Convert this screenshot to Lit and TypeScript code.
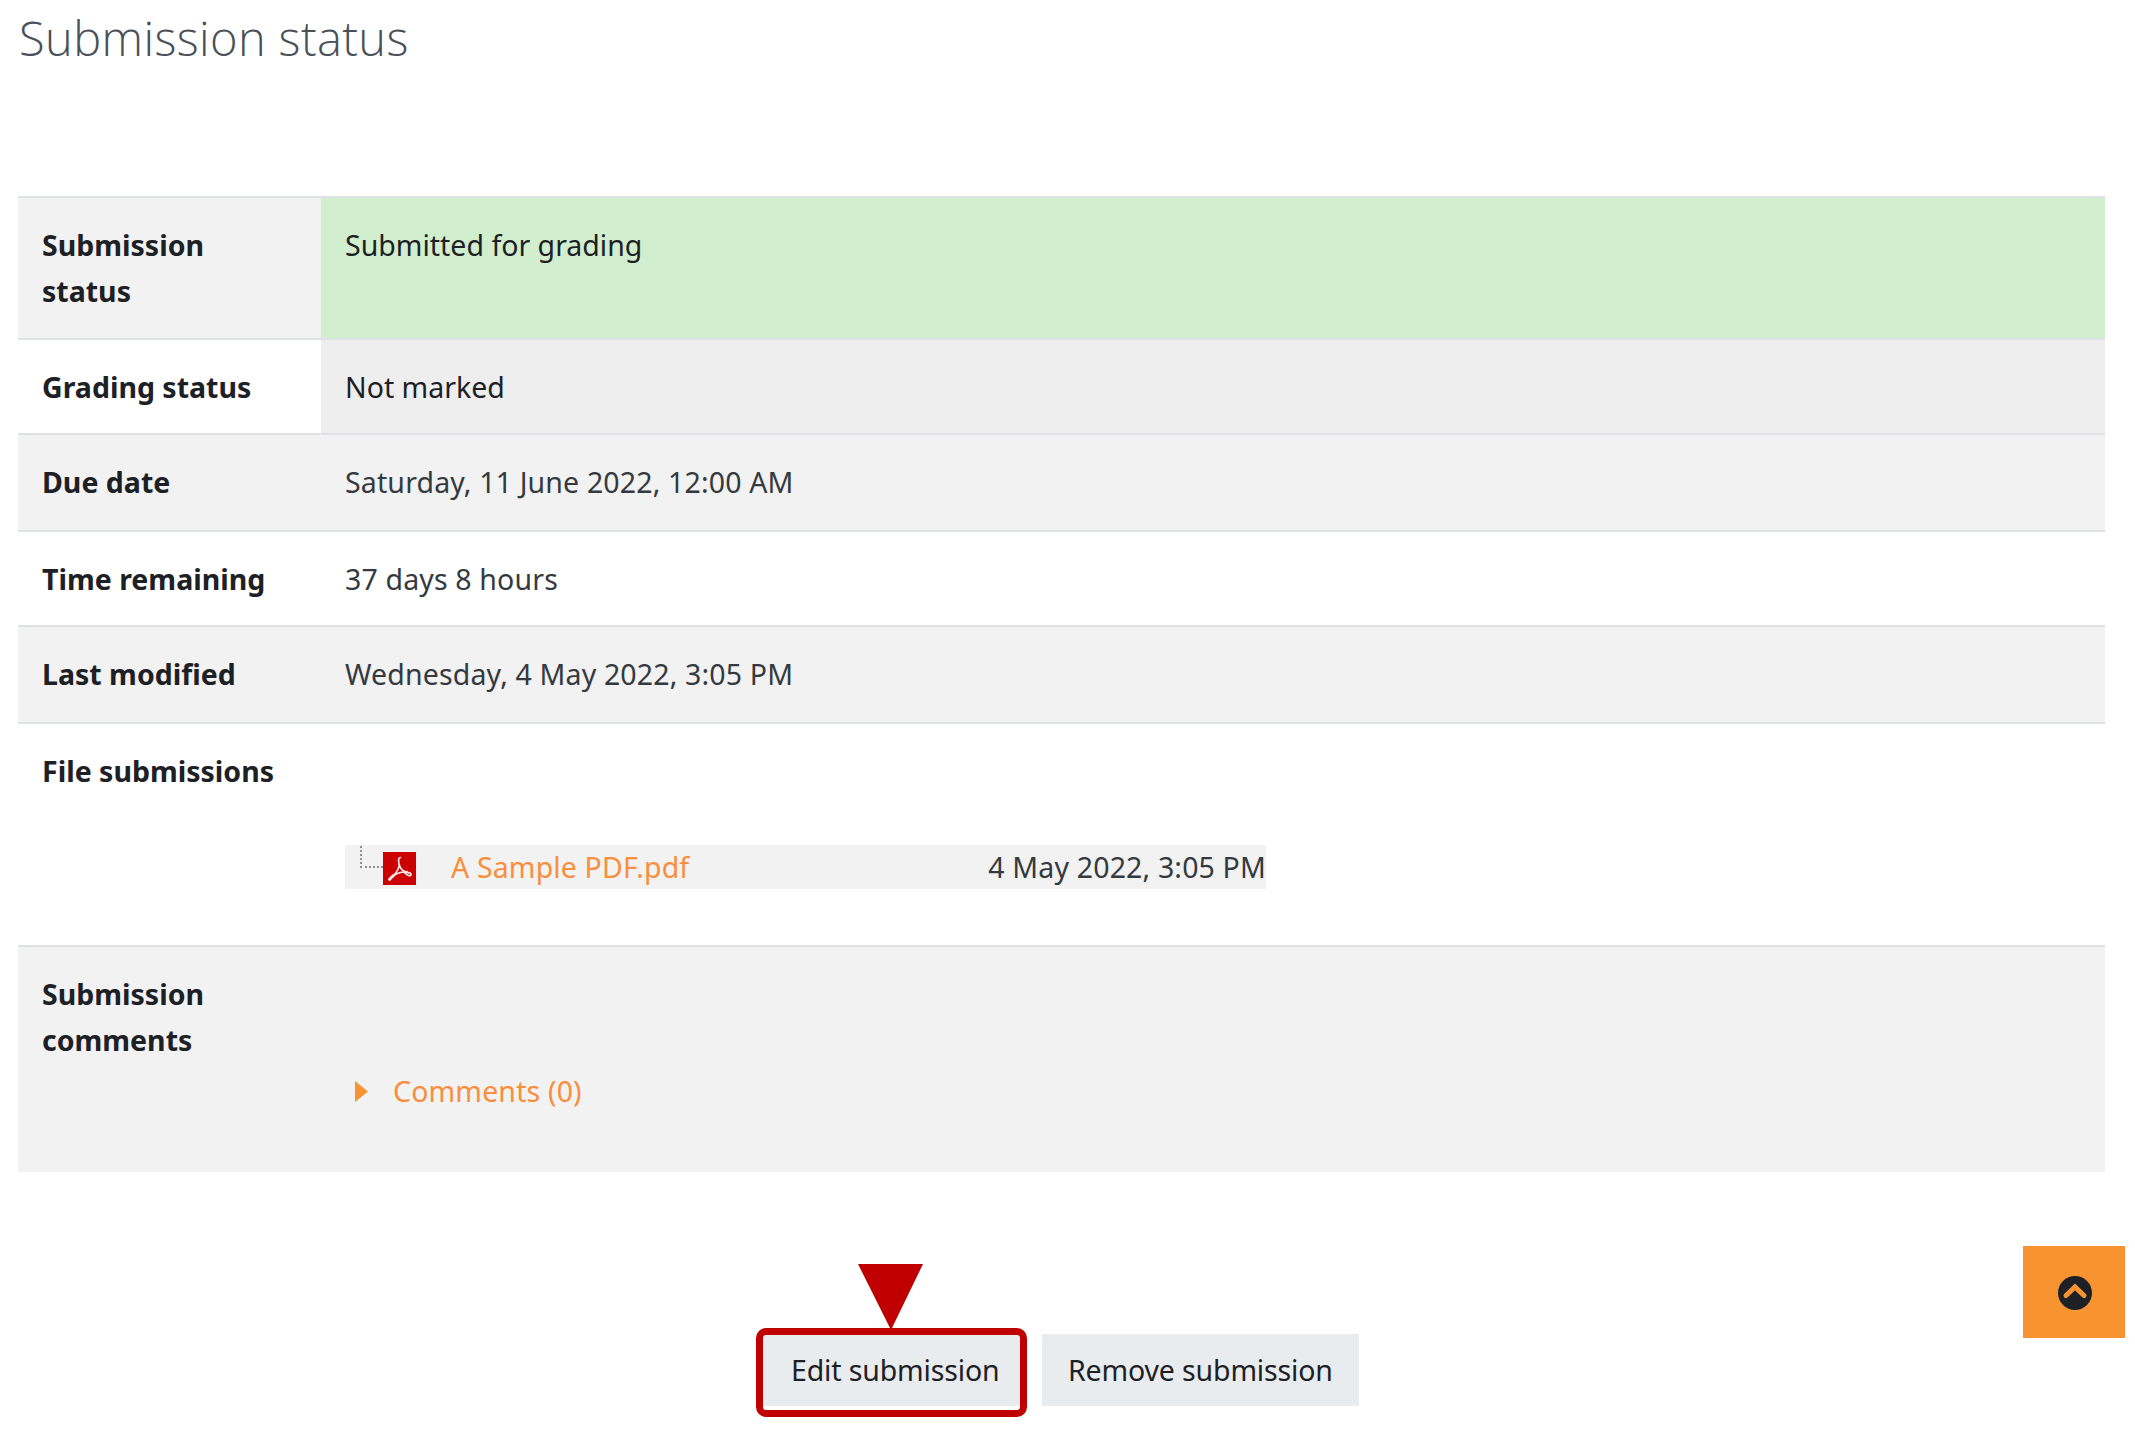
import { LitElement, html, css } from "lit";
import { customElement } from "lit/decorators.js";

const rows = [
  { label: "Submission status", value: "Submitted for grading", cls: "r-status", thc: "grey", tdc: "green" },
  { label: "Grading status", value: "Not marked", cls: "r-grading", thc: "", tdc: "marked" },
  { label: "Due date", value: "Saturday, 11 June 2022, 12:00 AM", cls: "r-due", thc: "grey", tdc: "grey muted" },
  { label: "Time remaining", value: "37 days 8 hours", cls: "r-time", thc: "", tdc: "muted" },
  { label: "Last modified", value: "Wednesday, 4 May 2022, 3:05 PM", cls: "r-mod", thc: "grey", tdc: "grey muted" },
];

@customElement("app-root")
export class AppRoot extends LitElement {
  static styles = css`
    :host {
      display: block;
      position: relative;
      height: 1452px;
      background: #fff;
      overflow: hidden;
      font-family: "Noto Sans", sans-serif;
      font-size: 28.5px;
      line-height: 45px;
      letter-spacing: 0.15px;
      color: #343a40;
    }
    .page { padding: 0 30px 0 18px; }
    h2 {
      margin: 0;
      height: 196px;
      padding: 10px 0 0 1px;
      box-sizing: border-box;
      font-size: 47px;
      line-height: 56px;
      font-weight: 300;
      font-family: "Open Sans", sans-serif;
      letter-spacing: 0.38px;
      color: #495057;
    }
    table { width: 100%; border-collapse: collapse; table-layout: fixed; }
    th, td {
      padding: 25px 24px 0;
      vertical-align: top;
      text-align: left;
      border-top: 2px solid #dee2e6;
    }
    th { width: 240px; padding-right: 39px; font-weight: 700; color: #1d2125; letter-spacing: 0; line-height: 45.5px; }
    .grey { background: #f2f2f2; }
    .green { background: #d1efcf; color: #1d2125; letter-spacing: 0; }
    .marked { background: #eeeeee; color: #1d2125; letter-spacing: 0; }
    .r-status { height: 142px; }
    .r-grading { height: 95px; }
    .r-due { height: 97px; }
    .r-time { height: 95px; }
    .r-mod { height: 97px; }
    .r-files { height: 223px; }
    .r-files td { padding-top: 121px; }
    .r-comments { height: 226px; }
    .r-comments td { padding-top: 122px; }
    a { color: #f98e3c; text-decoration: none; }
    .file {
      width: 921px;
      height: 44px;
      background: #f2f2f2;
      display: flex;
      align-items: center;
      line-height: 44px;
    }
    .tree {
      width: 23px;
      height: 22px;
      margin: -21px 0 0 15px;
      box-sizing: border-box;
      border-left: 2px dotted #8f8f8f;
      border-bottom: 2px dotted #8f8f8f;
    }
    .pdf { width: 33px; height: 33px; display: block; margin-top: 2px; }
    .file a { margin-left: 35px; flex: 1; }
    .comments { display: flex; align-items: center; gap: 25px; padding-left: 10px; }
    .caret { width: 13px; height: 21px; display: block; }
    .actions {
      display: flex;
      justify-content: flex-start;
      gap: 21px;
      padding: 162px 0 0 743px;
    }
    .btn {
      position: relative;
      height: 72px;
      padding: 0 26px;
      display: flex;
      align-items: center;
      background: #e9ecef;
      color: #1d2125;
      letter-spacing: -0.15px;
    }
    .edit { width: 260px; box-sizing: border-box; padding: 0 0 0 30px; }
    .edit::after {
      content: "";
      position: absolute;
      inset: -6px -6px -11px -5px;
      border: 7px solid #c00000;
      border-radius: 10px;
    }
    .arrow { position: absolute; left: 97px; top: -70px; width: 65px; height: 66px; display: block; }
    .top {
      position: absolute;
      left: 2023px;
      top: 1246px;
      width: 102px;
      height: 92px;
      background: #f79431;
      display: flex;
      align-items: center;
      justify-content: center;
    }
    .top svg { width: 34px; height: 34px; display: block; margin: 1px 0 0 1px; }
  `;

  render() {
    return html`
      <div class="page">
        <h2>Submission status</h2>
        <table>
          <tbody>
            ${rows.map(
              (r) => html`<tr class=${r.cls}>
                <th class=${r.thc}>${r.label}</th>
                <td class=${r.tdc}>${r.value}</td>
              </tr>`
            )}
            <tr class="r-files">
              <th>File submissions</th>
              <td>
                <div class="file">
                  <span class="tree"></span>
                  <svg class="pdf" viewBox="0 0 33 33">
                    <rect width="33" height="33" fill="#cc0000" />
                    <path d="M17.500 5.500C15 5.500 15.500 9 16 12 16.500 15 15 18 12 22 10 25 7 26 6.500 27.500M16 12C17 16 20 19.500 24 20.500 26.500 21 28.500 21 28 23 27.500 24.500 24 23.500 21.500 20.500M7.500 27C10 23 16 20 24 19.500"
                      fill="none" stroke="#fbe6e6" stroke-width="1.700" stroke-linecap="round" stroke-linejoin="round" />
                    <path d="M6.500 27.500C7.500 25.500 9 25 10.500 23.500" fill="none" stroke="#fbe6e6" stroke-width="2.800" stroke-linecap="round" />
                  </svg>
                  <a href="#">A Sample PDF.pdf</a>
                  <span>4 May 2022, 3:05 PM</span>
                </div>
              </td>
            </tr>
            <tr class="r-comments">
              <th class="grey">Submission comments</th>
              <td class="grey">
                <div class="comments">
                  <svg class="caret" viewBox="0 0 13 21"><path d="M0 0l13 10.500L0 21z" fill="#f79431" /></svg>
                  <a href="#">Comments (0)</a>
                </div>
              </td>
            </tr>
          </tbody>
        </table>
        <div class="actions">
          <div class="btn edit">
            Edit submission
            <svg class="arrow" viewBox="0 0 65 66"><path d="M0 0h65L33 66z" fill="#c00000" /></svg>
          </div>
          <div class="btn">Remove submission</div>
        </div>
      </div>
      <div class="top">
        <svg viewBox="0 0 34 34">
          <circle cx="17" cy="17" r="17" fill="#1d2125" />
          <path d="M8 19.500L17 11 26 19.500" fill="none" stroke="#f79431" stroke-width="5" stroke-linecap="round" />
        </svg>
      </div>
    `;
  }
}
